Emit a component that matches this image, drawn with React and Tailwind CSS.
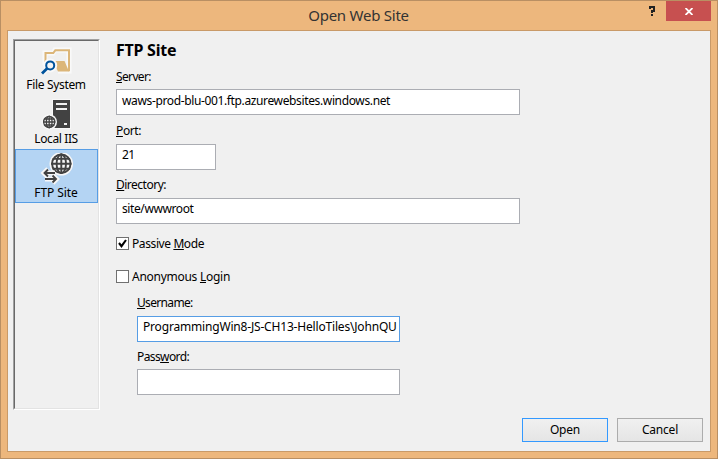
import React from "react";

const Key = ({ children }) => (
  <span className="underline decoration-1 underline-offset-[1px] [text-decoration-skip-ink:none]">{children}</span>
);

function FolderIcon() {
  return (
    <svg className="block h-8 w-[33px]" viewBox="0 0 33 32" fill="none">
      <path d="M5 20V8h8l2-3h14v21h-11" stroke="#f9f9f9" strokeWidth="5" />
      <path d="M5.500 18V8h7.800l2-2.700h13.700v21" stroke="#dcb679" strokeWidth="2" />
      <path d="M13 16h11.500l4.500 10.500H18z" fill="#dcb679" />
      <path d="M3 28l5-5" stroke="#f9f9f9" strokeWidth="5" />
      <circle cx="10.200" cy="20.400" r="5" stroke="#f9f9f9" strokeWidth="4" />
      <circle cx="10.200" cy="20.400" r="4" fill="#f4f4f4" stroke="#00539c" strokeWidth="2" />
      <path d="M2 28.500l5.300-5.300" stroke="#00539c" strokeWidth="2.800" />
    </svg>
  );
}

function Globe({ cx, cy, r, w }) {
  return (
    <g transform={`translate(${cx} ${cy})`} fill="none" strokeWidth={w}>
      <circle r={r + 1.6} fill="#f7f7f7" />
      <g stroke="#424242">
        <circle r={r - w / 2} />
        <ellipse rx={r * 0.46} ry={r - w / 2} />
        <path d={`M${-r} 0H${r}M0 ${-r}V${r}M${-r * 0.86} ${-r * 0.48}H${r * 0.86}M${-r * 0.86} ${r * 0.48}H${r * 0.86}`} />
      </g>
    </g>
  );
}

function ServerIcon() {
  return (
    <svg className="block h-8 w-[33px]" viewBox="0 0 33 32">
      <path d="M12 0h19v30H12z" fill="#f8f8f8" />
      <path d="M13 1h17v28H13z" fill="#424242" />
      <path d="M16 4h11v2H16zM16 9h11v2H16zM24 24h3v2h-3z" fill="#f0f0f0" />
      <Globe cx={9.2} cy={23} r={6.2} w={1.3} />
    </svg>
  );
}

function FtpIcon() {
  return (
    <svg className="block h-8 w-[33px]" viewBox="0 0 33 32">
      <Globe cx={21.3} cy={10.8} r={10.2} w={1.9} />
      <g fill="none" stroke="#f7f7f7" strokeWidth="5">
        <path d="M4 20h11M8 16l-4 4 4 4M5 26h11M12.500 22l4 4-4 4" />
      </g>
      <g fill="none" stroke="#424242" strokeWidth="1.900">
        <path d="M4.500 20H15M8 16.500L4.500 20 8 23.500M5 26h11M12.500 22.500L16 26l-3.500 3.500" />
      </g>
    </svg>
  );
}

const places = [
  { name: "File System", Icon: FolderIcon, css: "border-transparent tracking-[-0.33px]" },
  { name: "Local IIS", Icon: ServerIcon, css: "border-transparent tracking-[-0.38px]" },
  { name: "FTP Site", Icon: FtpIcon, css: "border-[#569de5] bg-[#b4d4f3] tracking-[-0.1px]" },
];

function Field({ label, value, box, labelCss = "h-5" }) {
  return (
    <div className="flex h-[54px] flex-col">
      <div className={`shrink-0 leading-4 ${labelCss}`}>{label}</div>
      <div className={`h-[26px] shrink-0 border bg-white pl-[5px] whitespace-nowrap ${box}`}>{value}</div>
    </div>
  );
}

function Check({ checked, children }) {
  return (
    <div className="flex h-[33px] items-start gap-[3px]">
      <span className="h-[13px] w-[13px] shrink-0 border border-[#707070] bg-white">
        {checked && (
          <svg viewBox="0 0 11 11" className="block h-[11px] w-[11px]">
            <path d="M2 5l2.500 3.200L9 2" fill="none" stroke="#000" strokeWidth="2.100" />
          </svg>
        )}
      </span>
      <span className="-mt-px leading-4">{children}</span>
    </div>
  );
}

export default function App() {
  return (
    <div className="flex h-[459px] w-[718px] flex-col overflow-hidden border border-[#b98f63] bg-[#edb77d] px-1.5 pb-1.5 font-['Noto_Sans',sans-serif] text-[12px] text-black">
      <header className="flex h-[29px] shrink-0 items-start">
        <div className="w-[637px] pl-[66px] text-center text-[15px] leading-[29px] tracking-[-0.25px] text-[#333]">Open Web Site</div>
        <svg className="mt-1 h-3 w-[22px] shrink-0" viewBox="0 0 22 12" fill="none" stroke="#222" strokeWidth="2">
          <path d="M6 4V2h4v4H8v2M8 9v2" />
        </svg>
        <div className="flex h-5 w-[45px] shrink-0 items-center justify-center bg-[#c75050]">
          <svg className="h-[7px] w-2" viewBox="0 0 8 7" fill="none" stroke="#fff" strokeWidth="1.800">
            <path d="M.5 0l7 7M7.500 0l-7 7" />
          </svg>
        </div>
      </header>
      <main className="flex h-[422px] w-[704px] shrink-0 flex-col border border-[#c99a68] bg-[#f0f0f0]">
        <div className="flex h-[387px] pt-2 pl-[5px]">
          <nav className="h-[371px] w-[87px] shrink-0 border border-t-[#a0a0a0] border-r-white border-b-white border-l-[#a0a0a0]">
            <div className="h-full border border-t-[#696969] border-r-[#e3e3e3] border-b-[#e3e3e3] border-l-[#696969]">
              {places.map(({ name, Icon, css }) => (
                <div key={name} className={`flex h-[54px] flex-col items-center border pt-[3px] ${css}`}>
                  <Icon />
                  <div className="pr-px leading-4">{name}</div>
                </div>
              ))}
            </div>
          </nav>
          <section className="box-content flex w-[404px] flex-col pl-4">
            <h1 className="h-[30px] text-[16px] leading-[22px] font-bold tracking-[-0.25px]">FTP Site</h1>
            <Field
              label={<><Key>S</Key>erver:</>}
              labelCss="h-5 tracking-[-0.65px]"
              value="waws-prod-blu-001.ftp.azurewebsites.windows.net"
              box="border-[#abadb3] leading-[22px] tracking-[-0.365px]"
            />
            <Field
              label={<><Key>P</Key>ort:</>}
              labelCss="h-[21px] tracking-[-0.4px]"
              value="21"
              box="w-[100px] border-[#abadb3] leading-5 tracking-[-0.5px]"
            />
            <Field
              label={<><Key>D</Key>irectory:</>}
              labelCss="h-[21px] tracking-[-0.5px]"
              value="site/wwwroot"
              box="border-[#abadb3] leading-5 tracking-[-0.4px]"
            />
            <div className="pt-1.5">
              <Check checked><span className="tracking-[-0.4px]">Passive <Key>M</Key>ode</span></Check>
              <Check><span className="tracking-[-0.27px]">Anonymous <Key>L</Key>ogin</span></Check>
            </div>
            <div className="-mt-2 w-[284px] pl-[21px]">
              <Field
                label={<><Key>U</Key>sername:</>}
                labelCss="h-[21px] tracking-[-0.67px]"
                value="ProgrammingWin8-JS-CH13-HelloTiles\JohnQU"
                box="border-[#569de5] leading-5 tracking-[-0.18px]"
              />
              <Field
                label={<>Pass<Key>w</Key>ord:</>}
                labelCss="h-5 tracking-[-0.6px]"
                value=""
                box="border-[#abadb3]"
              />
            </div>
          </section>
        </div>
        <footer className="flex justify-end gap-[9px] pr-[7px]">
          <button className="h-6 w-[86px] border border-[#3399ff] bg-linear-to-b from-[#f0f0f0] to-[#e5e5e5] leading-5 tracking-[-0.2px]">Open</button>
          <button className="h-6 w-[86px] border border-[#acacac] bg-linear-to-b from-[#f0f0f0] to-[#e5e5e5] leading-5 tracking-[-0.2px]">Cancel</button>
        </footer>
      </main>
    </div>
  );
}
